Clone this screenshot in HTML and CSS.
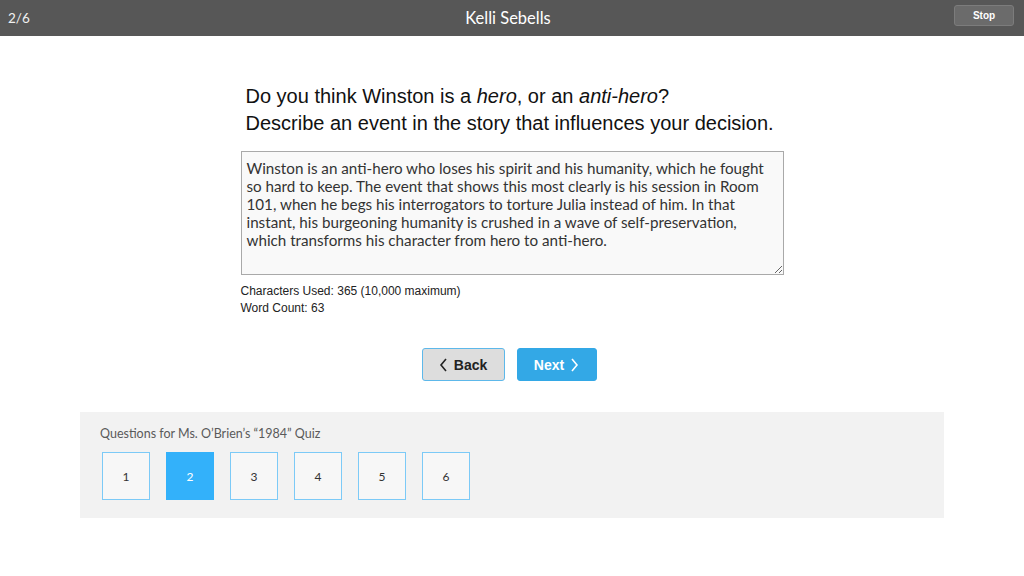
FILE: index.html
```html
<!DOCTYPE html>
<html>
<head>
<meta charset="utf-8">
<link rel="stylesheet" href="styles.css">
</head>
<body>
<header class="topbar">
  <span class="progress">2/6</span>
  <span class="student">Kelli Sebells</span>
  <button class="stop">Stop</button>
</header>
<main class="content">
  <section class="question">
    <h1 class="prompt">Do you think Winston is a <em>hero</em>, or an <em>anti-hero</em>?<br>Describe an event in the story that influences your decision.</h1>
    <textarea class="answer">Winston is an anti-hero who loses his spirit and his humanity, which he fought so hard to keep. The event that shows this most clearly is his session in Room 101, when he begs his interrogators to torture Julia instead of him. In that instant, his burgeoning humanity is crushed in a wave of self-preservation, which transforms his character from hero to anti-hero.</textarea>
    <div class="stats">
      <div>Characters Used: 365 (10,000 maximum)</div>
      <div>Word Count: 63</div>
    </div>
  </section>
  <nav class="nav-buttons">
    <button class="btn btn-back"><svg class="chev" width="9" height="14" viewBox="0 0 9 14"><path d="M7 1 L2 7 L7 13" fill="none" stroke="currentColor" stroke-width="1.6"/></svg>Back</button>
    <button class="btn btn-next">Next<svg class="chev" width="9" height="14" viewBox="0 0 9 14"><path d="M2 1 L7 7 L2 13" fill="none" stroke="currentColor" stroke-width="1.6"/></svg></button>
  </nav>
  <section class="quiz">
    <div class="quiz-title">Questions for Ms. O’Brien’s “1984” Quiz</div>
    <div class="quiz-items">
      <div class="qbox">1</div>
      <div class="qbox active">2</div>
      <div class="qbox">3</div>
      <div class="qbox">4</div>
      <div class="qbox">5</div>
      <div class="qbox">6</div>
    </div>
  </section>
</main>
</body>
</html>
```

FILE: styles.css
```css
html, body {
  margin: 0;
  padding: 0;
  background: #ffffff;
}
body {
  width: 1024px;
  height: 576px;
  overflow: hidden;
  font-family: Lato, "Noto Sans", sans-serif;
}
.topbar {
  height: 36px;
  background: #575757;
  display: flex;
  align-items: center;
  justify-content: space-between;
  padding: 0 10px 0 8px;
  box-sizing: border-box;
  position: relative;
  color: #ffffff;
}
.progress {
  font-size: 13.5px;
  color: #f0f0f0;
}
.student {
  position: absolute;
  left: 0;
  right: 0;
  text-align: center;
  font-size: 16.5px;
  margin-left: -8px;
  pointer-events: none;
}
.stop {
  margin-top: -5px;
  width: 60px;
  height: 21px;
  background: #6b6b6b;
  border: 1px solid #7c7c7c;
  border-radius: 3px;
  color: #ffffff;
  font-family: "Liberation Sans", Arial, sans-serif;
  font-weight: bold;
  font-size: 10px;
  padding: 0;
}
.content {
  display: flex;
  flex-direction: column;
  align-items: center;
}
.question {
  width: 543px;
  padding-top: 47px;
}
.prompt {
  margin: 0 0 14px 5px;
  font-family: "Liberation Sans", Arial, sans-serif;
  font-weight: normal;
  font-size: 20px;
  line-height: 27px;
  color: #111111;
}
.answer {
  display: block;
  width: 543px;
  height: 124px;
  box-sizing: border-box;
  margin: 0;
  padding: 7px 5px;
  border: 1px solid #a9a9a9;
  background: #f9f9f9;
  font-family: Lato, "Noto Sans", sans-serif;
  font-size: 15.2px;
  line-height: 18px;
  color: #333333;
  resize: vertical;
}
.stats {
  margin-top: 8px;
  font-family: "Liberation Sans", Arial, sans-serif;
  font-size: 12px;
  line-height: 17px;
  color: #222222;
}
.nav-buttons {
  display: flex;
  gap: 12px;
  margin-top: 31px;
  margin-right: 6px;
}
.btn {
  height: 33px;
  box-sizing: border-box;
  border-radius: 3px;
  font-family: "Liberation Sans", Arial, sans-serif;
  font-weight: bold;
  font-size: 14px;
  display: flex;
  align-items: center;
  justify-content: center;
  gap: 6px;
  padding: 0;
}
.btn-back {
  width: 83px;
  background: #dddddd;
  border: 1px solid #5db8ea;
  color: #222222;
}
.btn-next {
  width: 80px;
  background: #33a8e6;
  border: 1px solid #33a8e6;
  color: #ffffff;
}
.chev {
  display: block;
}
.quiz {
  margin-top: 31px;
  width: 864px;
  height: 106px;
  box-sizing: border-box;
  background: #f2f2f2;
  padding: 14px 22px 0 22px;
}
.quiz-title {
  font-size: 12.5px;
  color: #5a5a5a;
  margin-left: -2px;
  line-height: 16px;
}
.quiz-items {
  display: flex;
  gap: 16px;
  margin-top: 10px;
}
.qbox {
  width: 48px;
  height: 48px;
  box-sizing: border-box;
  border: 1px solid #7ccaf7;
  background: #f7f7f7;
  display: flex;
  align-items: center;
  justify-content: center;
  font-size: 12px;
  color: #333333;
}
.qbox.active {
  background: #33b1fa;
  border-color: #33b1fa;
  color: #ffffff;
}
```
